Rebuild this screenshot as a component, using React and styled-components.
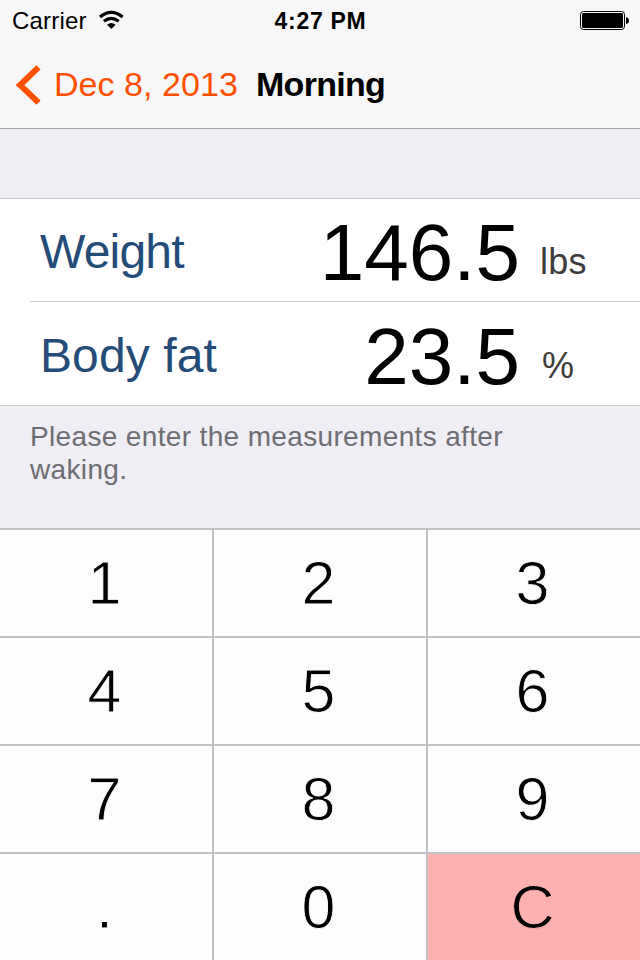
import React from 'react';
import styled, { createGlobalStyle } from 'styled-components';

const GlobalStyle = createGlobalStyle`
  * {
    box-sizing: border-box;
  }

  body {
    margin: 0;
    background-color: #efeef4;
    font-family: "Liberation Sans", Arial, sans-serif;
    color: #000;
  }
`;

const Screen = styled.div`
  width: 640px;
  height: 960px;
  display: flex;
  flex-direction: column;
  overflow: hidden;
  background-color: #efeef4;
`;

const Header = styled.header`
  height: 129px;
  background-color: #f7f7f7;
  border-bottom: 1px solid #a7a7aa;
`;

const StatusBar = styled.div`
  display: grid;
  grid-template-columns: 1fr auto 1fr;
  height: 41px;
  padding: 0 11px 0 12px;
  line-height: 41px;
  font-size: 24px;
`;

const Carrier = styled.div`
  display: flex;
  gap: 11px;
  letter-spacing: 0.2px;

  svg {
    margin-top: 10px;
  }
`;

const Clock = styled.div`
  padding-top: 1px;
  font-weight: bold;
  font-size: 23px;
  letter-spacing: 0.7px;
`;

const Battery = styled.svg`
  justify-self: end;
  margin-top: 11px;
`;

const NavBar = styled.nav`
  display: flex;
  align-items: center;
  height: 87px;
  padding-left: 16px;
  font-size: 34px;
`;

const BackLink = styled.a`
  display: flex;
  align-items: center;
  gap: 12px;
  width: 240px;
  color: #ff5000;
  white-space: nowrap;
  letter-spacing: 0.05px;
`;

const Title = styled.h1`
  margin: 0;
  font-size: 34px;
  letter-spacing: -0.7px;
`;

const Table = styled.section`
  margin-top: 69px;
  background-color: #fff;
  border-top: 1px solid #c8c7cc;
  border-bottom: 1px solid #c8c7cc;
`;

const Row = styled.div`
  display: flex;
  height: 103px;
  margin-left: 30px;
  padding-left: 10px;
  line-height: 102px;

  & + & {
    padding-top: 1px;
  }

  &:not(:last-child) {
    border-bottom: 1px solid #c8c7cc;
  }
`;

const Label = styled.div`
  width: 200px;
  padding-top: 2px;
  font-size: 48px;
  letter-spacing: ${props => props.$spacing}px;
  color: #244c78;
`;

const Value = styled.div`
  width: 281px;
  padding-top: 3px;
  padding-right: 1px;
  font-size: 80px;
  text-align: right;
`;

const Unit = styled.div`
  padding-top: 12px;
  padding-left: ${props => props.$indent}px;
  font-size: 36px;
  letter-spacing: 0.2px;
  color: #3c3c3c;
`;

const Note = styled.p`
  flex: 1;
  margin: 0;
  padding: 14px 100px 0 30px;
  font-size: 28px;
  line-height: 33px;
  letter-spacing: 0.35px;
  color: #6d6d72;
`;

const Keypad = styled.div`
  display: grid;
  grid-template-columns: repeat(3, 212px);
  grid-auto-rows: 106px;
  gap: 2px;
  padding-top: 2px;
  background-color: #c2c1c6;
`;

// The outline in the key's own colour thins the digits to a light weight.
const Key = styled.button`
  padding: 1px 3px 0 0;
  border: 0;
  background-color: ${props => (props.$clear ? '#ffb0b0' : '#fdfdfd')};
  -webkit-text-stroke: 0.9px ${props => (props.$clear ? '#ffb0b0' : '#fdfdfd')};
  color: #000;
  font-family: inherit;
  font-size: 61px;
  line-height: 105px;
`;

const measurements = [
  { label: 'Weight', value: '146.5', unit: 'lbs', spacing: -0.8, indent: 19 },
  { label: 'Body fat', value: '23.5', unit: '%', spacing: 0.1, indent: 21 }
];

const keys = ['1', '2', '3', '4', '5', '6', '7', '8', '9', '.', '0', 'C'];

const WifiIcon = () => (
  <svg width="26" height="20" viewBox="0 0 26 20">
    <path
      d="M2 7.1Q13.3 -2.2 24.6 7.1M5.9 11.2Q13.3 5.4 20.7 11.2"
      fill="none"
      stroke="#000"
      strokeWidth="3.2"
    />
    <path d="M9 14.7Q13.3 11.5 17.6 14.7L13.3 19Z" />
  </svg>
);

const App = () => (
  <Screen>
    <GlobalStyle />
    <Header>
      <StatusBar>
        <Carrier>
          Carrier
          <WifiIcon />
        </Carrier>
        <Clock>4:27 PM</Clock>
        <Battery width="49" height="19" viewBox="0 0 49 19">
          <rect x="0.5" y="0.5" width="44" height="18" rx="3" fill="none" stroke="#000" />
          <rect x="2" y="2" width="41" height="15" rx="1.5" />
          <path d="M46 6Q49 6.5 49 9.5T46 13Z" />
        </Battery>
      </StatusBar>
      <NavBar>
        <BackLink>
          <svg width="26" height="40" viewBox="0 0 26 40">
            <path d="M22.5 2.3L4 20L22.5 37.7" fill="none" stroke="#ff5000" strokeWidth="6" />
          </svg>
          Dec 8, 2013
        </BackLink>
        <Title>Morning</Title>
      </NavBar>
    </Header>
    <Table>
      {measurements.map(item => (
        <Row key={item.label}>
          <Label $spacing={item.spacing}>{item.label}</Label>
          <Value>{item.value}</Value>
          <Unit $indent={item.indent}>{item.unit}</Unit>
        </Row>
      ))}
    </Table>
    <Note>Please enter the measurements after waking.</Note>
    <Keypad>
      {keys.map(key => (
        <Key key={key} $clear={key === 'C'}>
          {key}
        </Key>
      ))}
    </Keypad>
  </Screen>
);

export default App;
